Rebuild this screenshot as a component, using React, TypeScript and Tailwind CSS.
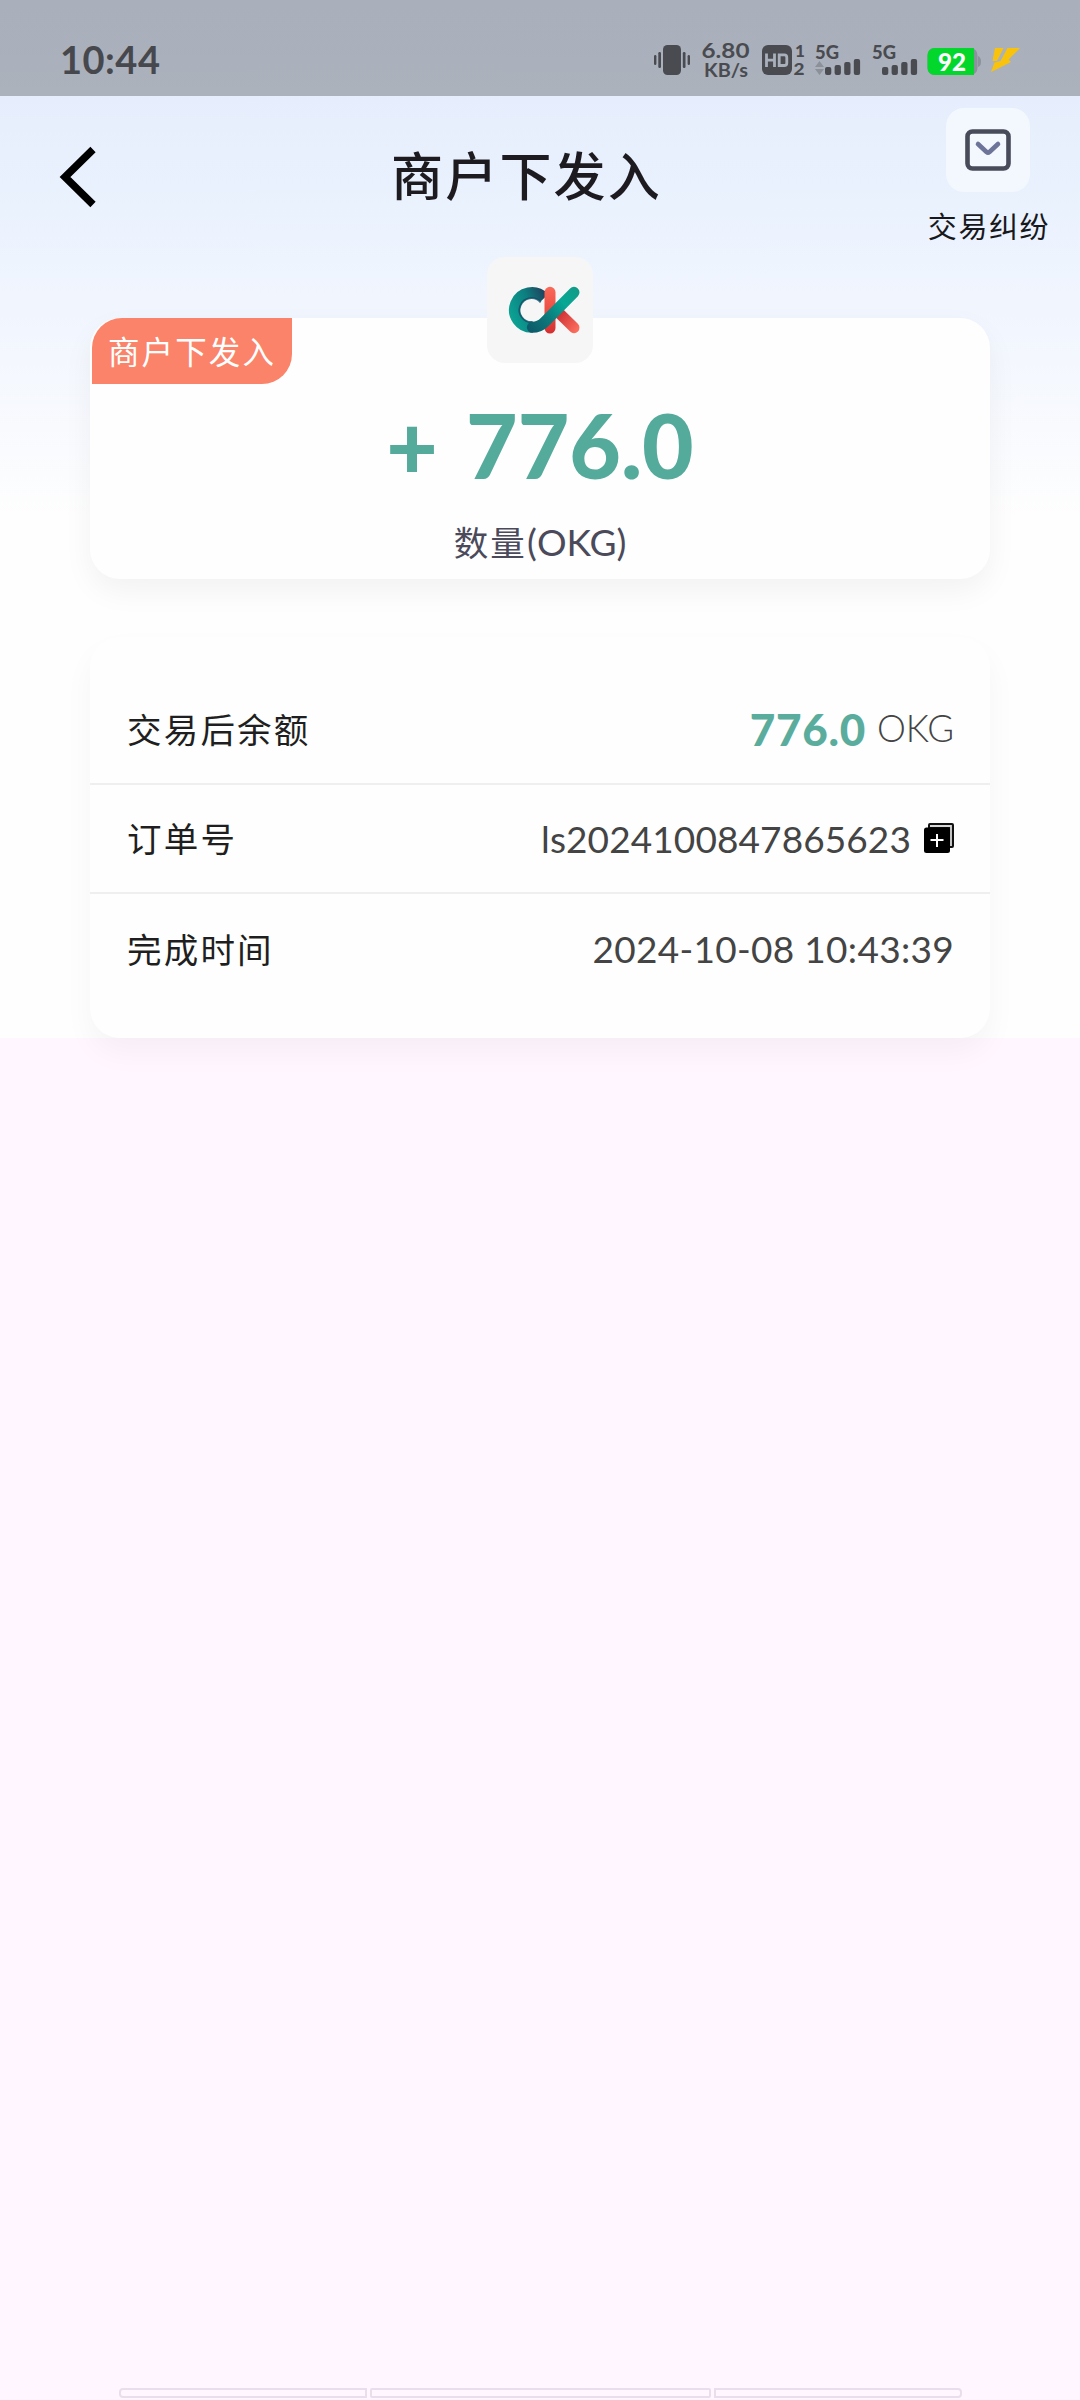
import type { ReactNode } from 'react';

// ---------------------------------------------------------------------------
// Status bar
// ---------------------------------------------------------------------------

function StatusIcons() {
  return (
    <svg
      width="380"
      height="60"
      viewBox="650 30 380 60"
      fill="#4a4b50"
      className="font-['Lato',sans-serif] font-bold"
    >
      {/* Vibrate */}
      <rect x="663" y="45" width="18" height="30" rx="4.5" />
      <rect x="658.3" y="52" width="2.7" height="16" rx="1.2" />
      <rect x="654" y="55" width="2.4" height="10" rx="1.2" />
      <rect x="682.8" y="52" width="2.7" height="16" rx="1.2" />
      <rect x="687.6" y="55" width="2.4" height="10" rx="1.2" />

      {/* Network speed */}
      <text x="701.5" y="57.5" fontSize="21" textLength="48" lengthAdjust="spacingAndGlyphs">6.80</text>
      <text x="704" y="76.5" fontSize="18" textLength="44" lengthAdjust="spacingAndGlyphs">KB/s</text>

      {/* HD calling */}
      <rect x="762" y="45" width="30" height="30" rx="6" />
      <g fill="none" stroke="#a9b0bc" strokeWidth="2.8">
        <path d="M766.5 53.5v13.5M774.5 53.5v13.5M766.5 60.2h8" />
        <path d="M779.2 54.9h5q2.6 0 2.6 2.6v5.4q0 2.6-2.6 2.6h-5z" />
      </g>
      <text x="795" y="57" fontSize="17" fontWeight="900">1</text>
      <text x="793.5" y="75" fontSize="17" fontWeight="900" textLength="11" lengthAdjust="spacingAndGlyphs">2</text>

      {/* SIM 1 */}
      <text x="815" y="59" fontSize="19" fontWeight="900" textLength="24" lengthAdjust="spacingAndGlyphs">5G</text>
      <path d="M819.5 61l4.5 6h-9zM819.5 75l-4.5-6h9z" fill="#8b9099" />
      <rect x="825" y="67" width="6.3" height="8" rx="2" />
      <rect x="834.6" y="65" width="6.3" height="10" rx="2" />
      <rect x="844.2" y="62" width="6.3" height="13" rx="2" />
      <rect x="853.8" y="59" width="6.3" height="16" rx="2" />

      {/* SIM 2 */}
      <text x="872" y="59" fontSize="19" fontWeight="900" textLength="24" lengthAdjust="spacingAndGlyphs">5G</text>
      <rect x="882" y="67" width="6.3" height="8" rx="2" />
      <rect x="891.6" y="65" width="6.3" height="10" rx="2" />
      <rect x="901.2" y="62" width="6.3" height="13" rx="2" />
      <rect x="910.8" y="59" width="6.3" height="16" rx="2" />

      {/* Battery */}
      <rect x="927.5" y="48" width="50" height="27" rx="7" fill="#8c929b" />
      <path d="M978 56q3 1 3 5.5t-3 5.5z" fill="#8c929b" />
      <path d="M934.5 48H974v27H934.5a7 7 0 0 1-7-7V55a7 7 0 0 1 7-7z" fill="#04d72b" />
      <text x="938" y="71" fontSize="24" fontWeight="900" fill="#fff" textLength="28" lengthAdjust="spacingAndGlyphs">92</text>
      <path
        d="M995 48h8.500l-6.500 13h-4.500zM1007.500 48h12.500l-11.500 11.500 2.500 2.500-9 4.500-11 5.500 3.500-9.500 6-1.500z"
        fill="#f9c20b"
      />
    </svg>
  );
}

function StatusBar() {
  return (
    <div className="flex h-24 items-start justify-between bg-linear-to-b from-[#a9afbb] to-[#abb2bc] pl-[60px] pr-[50px]">
      <span className="pt-[39px] font-['Lato',sans-serif] text-[38px] font-bold leading-[40px] tracking-[0.5px] text-[#46484d]">
        10:44
      </span>
      <div className="pt-[30px]">
        <StatusIcons />
      </div>
    </div>
  );
}

// ---------------------------------------------------------------------------
// Header
// ---------------------------------------------------------------------------

function Header() {
  return (
    <header className="grid h-[161px] grid-cols-[300px_1fr_300px]">
      <svg width="40" height="64" viewBox="0 0 40 64" className="ml-[58px] mt-[49px]">
        <path d="M35 4.5L7 32l28 27.500" fill="none" stroke="#000" strokeWidth="7.5" />
      </svg>
      <h1 className="mt-12 h-[60px] whitespace-nowrap pr-[27px] text-center text-[52px] font-medium leading-[60px] tracking-[2.2px] text-[#1d1b20]">
        商户下发入
      </h1>
      <div className="ml-[146px] mt-3 flex w-[124px] flex-col items-center">
        <div className="flex size-[84px] items-center justify-center rounded-[18px] bg-[#f3f8fe]">
          <svg width="46" height="42" viewBox="0 0 46 42" fill="none">
            <rect x="2.5" y="2.5" width="41" height="37" rx="5" stroke="#474b5a" strokeWidth="4.6" />
            <path d="M13 15l8.5 8q1.5 1.2 3 0l8.5-8" stroke="#6d7499" strokeWidth="4.6" strokeLinecap="round" />
          </svg>
        </div>
        <span className="mt-[13px] whitespace-nowrap pl-[2px] text-[29px] leading-10 tracking-[1.6px] text-[#17181c]">
          交易纠纷
        </span>
      </div>
    </header>
  );
}

// ---------------------------------------------------------------------------
// Amount card
// ---------------------------------------------------------------------------

function CoinLogo() {
  return (
    <svg width="106" height="106" viewBox="50 21 318 318" fill="none" strokeWidth="33">
      <defs>
        <linearGradient id="ring" x1="118" y1="200" x2="235" y2="150" gradientUnits="userSpaceOnUse">
          <stop offset="0" stopColor="#0ba394" />
          <stop offset="0.55" stopColor="#0d7f80" />
          <stop offset="1" stopColor="#20405c" />
        </linearGradient>
        <linearGradient id="arm" x1="180" y1="240" x2="320" y2="120" gradientUnits="userSpaceOnUse">
          <stop offset="0" stopColor="#0d5b6a" />
          <stop offset="0.35" stopColor="#0b7a7c" />
          <stop offset="0.7" stopColor="#06a895" />
          <stop offset="1" stopColor="#129c88" />
        </linearGradient>
        <linearGradient id="stem" x1="0" y1="110" x2="0" y2="250" gradientUnits="userSpaceOnUse">
          <stop offset="0" stopColor="#fb6a58" />
          <stop offset="0.6" stopColor="#e8483f" />
          <stop offset="1" stopColor="#d32f31" />
        </linearGradient>
        <linearGradient id="leg" x1="265" y1="195" x2="320" y2="240" gradientUnits="userSpaceOnUse">
          <stop offset="0" stopColor="#cf3336" />
          <stop offset="1" stopColor="#fb6d5c" />
        </linearGradient>
      </defs>
      <path d="M222 144A52 52 0 1 0 187 232" stroke="url(#ring)" />
      <path d="M211 157A36 36 0 1 0 187 216" stroke="#0f4c66" strokeWidth="6" opacity="0.75" />
      <rect x="222.5" y="110.5" width="33" height="140" rx="16.5" fill="url(#stem)" />
      <path d="M262 185L311 233" stroke="url(#leg)" strokeLinecap="round" />
      <path d="M186 232Q207 232 223 216L311 127" stroke="url(#arm)" strokeLinecap="round" />
    </svg>
  );
}

function AmountCard() {
  return (
    <section className="relative mx-[90px] mt-[61px] h-[261px] rounded-[30px] bg-[#fefefe] shadow-[0_12px_30px_rgba(0,0,0,0.05)]">
      <span className="absolute left-[2px] top-0 flex h-[66px] w-[200px] items-center justify-center whitespace-nowrap rounded-br-[30px] rounded-tl-[30px] bg-[#fb8369] text-[31.5px] tracking-[2.1px] text-white">
        商户下发入
      </span>
      <div className="absolute -top-[61px] left-[397px] overflow-hidden rounded-[18px] bg-[#f6f6f6]">
        <CoinLogo />
      </div>
      <div className="flex flex-col items-center pt-[77px]">
        <div className="h-[100px] whitespace-pre font-['Lato',sans-serif] text-[89px] font-black leading-[100px] text-[#55ab9b] [word-spacing:7px]">
          + 776.0
        </div>
        <div className="mt-[21px] h-[50px] whitespace-nowrap text-[34.5px] leading-[50px] text-[#4b4a5b]">
          <span className="tracking-[2.2px]">数量</span>
          <span className="font-['Lato',sans-serif] text-[37px]">(OKG)</span>
        </div>
      </div>
    </section>
  );
}

// ---------------------------------------------------------------------------
// Detail card
// ---------------------------------------------------------------------------

function DetailRow({ label, children }: { label: string; children: ReactNode }) {
  return (
    <div className="flex h-[109.5px] items-center justify-between pl-[37px] pr-[36px]">
      <span className="text-[34.5px] tracking-[2.2px] text-[#1f1f21]">{label}</span>
      <div className="flex items-center font-['Lato',sans-serif] text-[37px] text-[#444]">{children}</div>
    </div>
  );
}

function CopyIcon() {
  return (
    <svg width="30" height="30" viewBox="0 0 30 30" className="ml-[13px]">
      <path d="M6 0h22q2 0 2 2v21q0 2-2 2h-3V5H4V2q0-2 2-2z" fill="#111" />
      <path d="M6 3h21v20" fill="none" stroke="#d8d8d8" strokeWidth="1.8" />
      <rect y="4.5" width="26" height="25.5" rx="2.5" fill="#000" />
      <path d="M13 11v13M6.5 17h13" stroke="#fff" strokeWidth="2" />
    </svg>
  );
}

function DetailCard() {
  return (
    <section className="mx-[90px] mt-[58px] h-[401px] divide-y-2 divide-[#efeff0] rounded-[30px] bg-[#fefefe] pt-[38px] shadow-[0_15px_30px_rgba(0,0,0,0.04)]">
      <DetailRow label="交易后余额">
        <span className="text-[44px] font-black tracking-[0.7px] text-[#5aad9d]">776.0</span>
        <span className="ml-[11px] text-[36.5px] font-light">OKG</span>
      </DetailRow>
      <DetailRow label="订单号">
        <span className="tracking-[0.1px]">ls2024100847865623</span>
        <CopyIcon />
      </DetailRow>
      <DetailRow label="完成时间">
        <span className="tracking-[0.3px]">2024-10-08 10:43:39</span>
      </DetailRow>
    </section>
  );
}

export default function App() {
  return (
    <div className="flex h-[2400px] w-[1080px] flex-col overflow-hidden bg-[#fff6ff] font-['Noto_Sans_CJK_SC',sans-serif]">
      <div className="h-[1038px] bg-[#fefefe] bg-linear-[180deg,#e6edfc_96px,#eaf2fe_208px,#eef4fe_260px,#f2f6fe_330px,#fefefe_520px]">
        <StatusBar />
        <Header />
        <AmountCard />
        <DetailCard />
      </div>

      {/* Gesture bar segments */}
      <div className="mb-[2px] mt-auto flex h-[10px] justify-center gap-[3px]">
        <div className="w-[248px] rounded-l-[4px] border-2 border-[#e9deeb]" />
        <div className="w-[341px] rounded-[2px] border-2 border-[#e9deeb]" />
        <div className="w-[248px] rounded-r-[4px] border-2 border-[#e9deeb]" />
      </div>
    </div>
  );
}
